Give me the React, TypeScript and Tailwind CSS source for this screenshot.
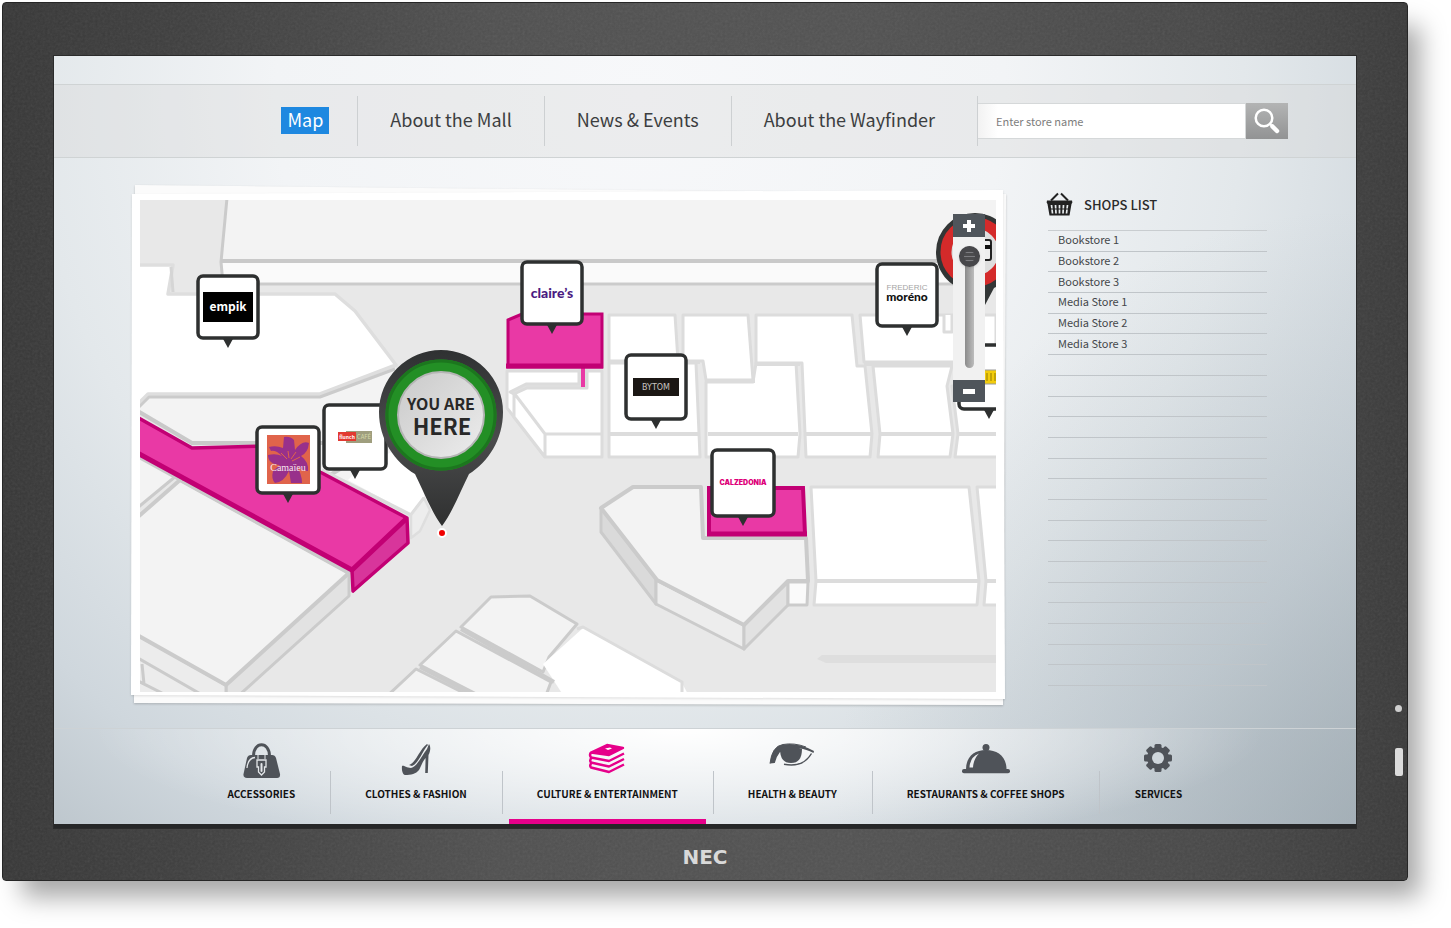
import { useState } from "react";
import type { ReactNode } from "react";

const NAV_ITEMS = ["Map", "About the Mall", "News & Events", "About the Wayfinder"];

const SHOPS = [
  "Bookstore 1",
  "Bookstore 2",
  "Bookstore 3",
  "Media Store 1",
  "Media Store 2",
  "Media Store 3",
];

const LIST_ROWS = 22;

function BagIcon() {
  return (
    <svg viewBox="0 0 48 36" className="h-9 w-12" fill="none" aria-hidden="true">
      <path d="M16.500 13C16.500-2 32.500-2 32.500 13" stroke="#4f5359" strokeWidth="3" />
      <path
        d="M14 12H35Q38 12 39 15L43 31Q43.500 35 40 35H10Q6 35 6.500 31L10 15Q11 12 14 12Z"
        fill="#4f5359"
      />
      <path d="M10 25Q11 15 18 14.500" stroke="#e3e6e9" strokeWidth="1.300" />
      <path d="M21 10V16M28 10V16" stroke="#e3e6e9" strokeWidth="1" />
      <path
        d="M20 17H29V24H27.500V29L24.500 32L21.500 29V24H20Z"
        stroke="#e3e6e9"
        strokeWidth="1.300"
      />
      <path d="M24.500 21V28" stroke="#e3e6e9" strokeWidth="2" strokeLinecap="round" />
    </svg>
  );
}

function ShoeIcon() {
  return (
    <svg viewBox="0 0 48 36" className="h-9 w-12" fill="#4f5359" aria-hidden="true">
      <path d="M10 23C12 22 14 25 19 25C25 24 30 12 35 6L37 1C39 4 38.500 8 36.500 12L35.800 30H33.200L33.600 15C30 19 29 24 27 27C24 31 19 32 13 32C10.500 31.500 9.500 27 10 23Z" />
      <path d="M17 22C24 20 27 7 35 1L36 2C31 7 27 20 20 23Z" />
    </svg>
  );
}

function BooksIcon() {
  return (
    <svg viewBox="0 0 48 36" className="h-9 w-12" fill="none" aria-hidden="true">
      <g stroke="#e6008a" strokeWidth="2.400" strokeLinejoin="round">
        <path d="M8 9.500L24 2L40 5L26 12Z" fill="#e6008a" />
        <path d="M8 9.500Q6 12 8 14.500L26 18L41 10.500" />
        <path d="M9 14.500Q6 17 8 19.500L26 23.500L41 16" />
        <path d="M9 19.500Q6 22 8 24.500L26 29L41 21.500" />
      </g>
      <path d="M22 5.500L27 4.500L29 5.500L25 7Z" fill="#fff" />
    </svg>
  );
}

function EyeIcon() {
  return (
    <svg viewBox="0 0 48 36" className="h-9 w-12" fill="none" aria-hidden="true">
      <path
        d="M2 20.500Q4 3 15 1.500Q30-1 46 8L45.500 10Q38 6 32 5.500L12 9Q8 14 6.800 20Z"
        fill="#4f5359"
      />
      <path d="M12 6Q12 20 23 20T34 6L22 2Z" fill="#4f5359" />
      <path d="M2 20.500Q4 3 15 1.500Q26-.500 38 4" stroke="#4f5359" strokeWidth="1" />
      <path d="M16 21.300Q35 25 43.500 10.500" stroke="#4f5359" strokeWidth="1.400" />
    </svg>
  );
}

function ClocheIcon() {
  return (
    <svg viewBox="0 0 48 36" className="h-9 w-12" aria-hidden="true">
      <g fill="#4f5359">
        <circle cx="24" cy="4.500" r="3.500" />
        <path d="M4 26.500C4 14 12 7 24 7S44.500 14 44.500 26.500Z" />
        <rect y="26" width="48" height="4.200" rx="2" />
      </g>
      <path d="M7.500 24.500Q8 14 17 10.500Q11.500 16 11 24.500Z" fill="#eceef0" />
    </svg>
  );
}

function GearIcon() {
  return (
    <svg viewBox="0 0 48 36" className="h-9 w-12" aria-hidden="true">
      <g fill="#4f5359">
        {[0, 45, 90, 135].map((angle) => (
          <rect
            key={angle}
            x="20.500"
            y="1"
            width="7"
            height="28"
            rx="1.500"
            transform={`rotate(${angle} 24 15)`}
          />
        ))}
      </g>
      <circle cx="24" cy="15" r="8.500" fill="none" stroke="#4f5359" strokeWidth="5" />
      <circle cx="24" cy="15" r="6" fill="#cfd6db" />
    </svg>
  );
}

function BasketIcon() {
  return (
    <svg viewBox="0 0 27 24" className="h-6 w-[27px]" aria-hidden="true">
      <path d="M5 8.500L12 1.500M15 1.500L22 8.500" stroke="#222" strokeWidth="2" />
      <path d="M1 8.500H26Q27 10.500 25.500 12L23.500 23.500H3.500L1.500 12Q0 10.500 1 8.500Z" fill="#222" />
      <path
        d="M5.500 13L6.500 21.500M9.500 13L10 21.500M13.500 13V21.500M17.500 13L17 21.500M21.500 13L20.500 21.500"
        stroke="#e8ecee"
        strokeWidth="1.700"
      />
      <path d="M3 17H24" stroke="#222" strokeWidth="1" />
    </svg>
  );
}

const CATEGORIES = [
  { label: "ACCESSORIES", icon: <BagIcon /> },
  { label: "CLOTHES & FASHION", icon: <ShoeIcon /> },
  { label: "CULTURE & ENTERTAINMENT", icon: <BooksIcon /> },
  { label: "HEALTH & BEAUTY", icon: <EyeIcon /> },
  { label: "RESTAURANTS & COFFEE SHOPS", icon: <ClocheIcon /> },
  { label: "SERVICES", icon: <GearIcon /> },
];

interface StoreMarkerProps {
  x: number;
  y: number;
  width?: number;
  height?: number;
  children?: ReactNode;
}

// x and y are the top centre of the marker box
function StoreMarker({ x, y, width = 60, height = 62, children }: StoreMarkerProps) {
  return (
    <g transform={`translate(${x} ${y})`}>
      <path d={`M-6 ${height}H6L0 ${height + 11}Z`} fill="#2e3030" />
      <rect
        x={-width / 2}
        y="1"
        width={width}
        height={height}
        rx="5"
        fill="#fff"
        stroke="#2e3030"
        strokeWidth="3.500"
      />
      {children}
    </g>
  );
}

function MallMap() {
  return (
    <svg
      viewBox="140 200 856 492"
      className="relative block h-auto w-full bg-[#e8e8e8]"
      role="img"
      aria-label="Mall map"
    >
      <defs>
        <linearGradient id="pinFace" x1="0" y1="0" x2="1" y2="1">
          <stop offset="0" stopColor="#c9c9c9" />
          <stop offset="1" stopColor="#ededed" />
        </linearGradient>
        <linearGradient id="pinBody" x1="0" y1="0" x2="0" y2="1">
          <stop offset="0" stopColor="#2f3132" />
          <stop offset="0.500" stopColor="#4a4b4c" />
          <stop offset="1" stopColor="#2f3030" />
        </linearGradient>
      </defs>

      {/* Upper corridor */}
      <path d="M227 198L221 262H1000V198Z" fill="#f3f3f3" />
      <path d="M221 262H1000V284H223Z" fill="#fafafa" />
      <path d="M227 198L221 262L223 284H1000" fill="none" stroke="#cbcbcb" strokeWidth="3" />
      <path d="M221 261H1000" stroke="#c9c9c9" strokeWidth="4" />

      {/* West stores */}
      <g strokeLinejoin="round">
        <path
          d="M130 404L148 397H320L395 368L440 420L432 510L412 516L330 475L262 442H192L130 406Z"
          fill="#f3f3f3"
        />
        <path
          d="M130 265H173L168 294H335L355 311L374 336L396 365L320 394H148L136 406H130Z"
          fill="#fff"
          stroke="#dedede"
          strokeWidth="3.500"
        />
        <path d="M171 267L173 292" stroke="#d5d5d5" strokeWidth="3" />
        <path d="M138 408L149 397H320L395 369" fill="none" stroke="#cbcbcb" strokeWidth="3" />
        <path d="M348 480L364 464L420 440L424 497L411 514Z" fill="#fff" />
        <path d="M325 478L352 462" stroke="#cbcbcb" strokeWidth="4" />
        <path d="M322 470L411 515L424 498" fill="none" stroke="#dcdcdc" strokeWidth="3.500" />
        <path d="M411 515V538L420 531L430 510L424 498Z" fill="#ededed" stroke="#dedede" strokeWidth="2.500" />
        <path d="M136 410L192 443H330" fill="none" stroke="#c9c9c9" strokeWidth="4" />
      </g>

      {/* South west block */}
      <g strokeLinejoin="round" stroke="#cbcbcb" strokeWidth="3">
        <path d="M130 452L176 476L130 514Z" fill="#f3f3f3" />
        <path d="M226 685L349 572V596L236 698H226Z" fill="#e2e2e2" />
        <path d="M130 631L226 685V700H130Z" fill="#ececec" />
        <path d="M130 524L180 480L349 573L226 685L130 631Z" fill="#f3f3f3" strokeWidth="4" />
        <path d="M138 457L349 573" />
        <path d="M138 658L204 696M138 681L162 693M142 664L144 684" fill="none" />
      </g>

      {/* Highlighted long store */}
      <path d="M352 570L407 518L408 543L353 593Z" fill="#d8359b" />
      <path d="M130 412L192 447H265L322 473L407 518L352 570L130 449Z" fill="#e939a5" />
      <path d="M178 474L183 481L186 477Z" fill="#e939a5" />
      <g fill="none" stroke="#c20074" strokeLinejoin="round">
        <path d="M130 413L192 448L265 446L322 473L407 518L408 543L353 591L352 570L407 518" strokeWidth="3.500" />
        <path d="M130 449L352 570L406 519" strokeWidth="5" />
      </g>

      {/* South stores */}
      <g strokeLinejoin="round" stroke="#cbcbcb" strokeWidth="3">
        <path d="M461 627L491 597L530 596L577 624L549 657L543 672Z" fill="#f3f3f3" />
        <path d="M420 665L456 631L551 682L545 698H484Z" fill="#f3f3f3" />
        <path d="M385 698L416 669L474 698Z" fill="#f3f3f3" />
        <path d="M583 628L543 664L565 698H690L682 683Z" fill="#fff" stroke="none" />
        <path d="M577 629L583 627L682 682V698" fill="none" stroke="#dcdcdc" />
        <path d="M461 629L554 682M420 667L480 698" strokeWidth="4" />
      </g>

      {/* Middle row */}
      <g fill="#fff" stroke="#dcdcdc" strokeWidth="3" strokeLinejoin="round">
        <path d="M507 371H602V457H545L514 417L507 408Z" />
        <path d="M514 393L545 434V457M514 393V417L545 457M545 434H602" />
        <path d="M510 392L526 384H579V371H587V388H527L514 394Z" fill="#e0e0e0" />
        <path d="M609 315H675L678 361H609Z" />
        <path d="M609 363H696L700 457H609Z" />
        <path d="M683 315H748L753 380H706L703 361H683Z" />
        <path d="M706 382H753L756 363H796L800 434L798 457H706Z" />
        <path d="M756 315H852L857 366H865L872 434L870 457H806L802 363H756Z" />
        <path d="M860 315H996V362H864Z" />
        <path d="M873 366H952L947 386L953 434L950 457H878L880 434Z" />
        <path d="M944 315V332H952V315" />
        <path d="M952 386H957V362H1000V457H955L958 434Z" />
        <path
          d="M609 434H698M708 434H798M806 434H872M880 434H952M958 434H1000M611 362H700M706 381H755M756 364H800M864 364H1000"
          strokeWidth="4"
        />
      </g>

      {/* Highlighted store under the claire's marker */}
      <path d="M581 368H585V387H581Z" fill="#e939a5" />
      <path d="M508 320L522 314H602V367H508Z" fill="#e939a5" stroke="#c20074" strokeWidth="3" />
      <path d="M506 366H603" stroke="#c20074" strokeWidth="5" />

      {/* South east stores */}
      <g strokeLinejoin="round" stroke="#cbcbcb" strokeWidth="3">
        <path d="M601 508V532L656 604V579Z" fill="#dadada" />
        <path d="M656 580L744 625V649L656 604Z" fill="#ededed" />
        <path d="M744 625L788 582V605L744 649Z" fill="#e2e2e2" />
        <path d="M788 582H808L807 605H788Z" fill="#fafafa" />
        <path
          d="M601 508L633 487H701L703 538H806L808 581H788L744 625L657 580Z"
          fill="#f3f3f3"
          strokeWidth="4"
        />
      </g>
      <g fill="#fff" stroke="#dcdcdc" strokeWidth="3" strokeLinejoin="round">
        <path d="M811 487H969L979 581L977 605H814L816 581Z" />
        <path d="M977 487H1000V605H984L986 581Z" />
        <path d="M816 581H979M986 581H1000" strokeWidth="4" />
      </g>
      <path d="M709 488H803L805 534H709Z" fill="#e939a5" stroke="#c20074" strokeWidth="4" />
      <path d="M707 534H807" stroke="#c20074" strokeWidth="5" />
      <path d="M817 659L822 655H996V663H826Z" fill="#dedede" />

      <StoreMarker x={228} y={275}>
        <rect x="-25" y="17" width="50" height="30" fill="#000" />
        <text y="36" textAnchor="middle" fill="#fff" fontSize="12" fontWeight="700">
          empik
        </text>
      </StoreMarker>
      <StoreMarker x={552} y={261}>
        <text
          y="37"
          textAnchor="middle"
          fill="#4b1c82"
          fontSize="14"
          fontWeight="900"
          className="font-['Lato',sans-serif]"
        >
          claire’s
        </text>
      </StoreMarker>
      <StoreMarker x={656} y={354} height={64}>
        <rect x="-23" y="24" width="46" height="18" fill="#1b1714" />
        <text
          y="36"
          textAnchor="middle"
          fill="#c8c4c0"
          fontSize="8"
          className="font-['DejaVu_Sans',sans-serif]"
        >
          BYTOM
        </text>
      </StoreMarker>
      <StoreMarker x={907} y={263}>
        <text
          y="27"
          textAnchor="middle"
          fill="#a5a5a5"
          fontSize="8"
          className="font-['Liberation_Sans',sans-serif]"
        >
          FREDERIC
        </text>
        <text
          y="38"
          textAnchor="middle"
          fill="#111"
          fontSize="12"
          fontWeight="900"
          className="font-['Lato',sans-serif]"
        >
          moréno
        </text>
      </StoreMarker>
      <StoreMarker x={743} y={449} width={62} height={66}>
        <text
          y="36"
          textAnchor="middle"
          fill="#dd0079"
          fontSize="7"
          fontWeight="900"
          className="font-['Inter',sans-serif]"
        >
          CALZEDONIA
        </text>
      </StoreMarker>
      <StoreMarker x={355} y={404} height={64} width={62}>
        <rect x="-9" y="27" width="26" height="12" fill="#9f9e7e" />
        <rect x="-17" y="28" width="18" height="9" fill="#e23a31" />
        <text x="-8" y="35" textAnchor="middle" fill="#fff" fontSize="5" fontWeight="700">
          flunch
        </text>
        <text x="9" y="35" textAnchor="middle" fill="#d3d9a8" fontSize="6">
          CAFÉ
        </text>
      </StoreMarker>
      <StoreMarker x={288} y={426} height={66} width={62}>
        <rect x="-21" y="9" width="43" height="49" fill="#e0644b" />
        <path
          d="M-4 11Q2 10 6 14L7 24Q14 14 21 17Q20 27 13 30Q21 36 20 45Q13 45 8 39Q14 48 14 57H3L1 45Q-4 56-13 57Q-17 53-15 45L-8 39Q-20 38-20 29Q-12 27-6 30Q-12 24-17 25L-19 21Q-12 19-5 22Z"
          fill="#98308b"
        />
        <path d="M-1 33L-7 27M1 32L0 25M3 33L8 26M4 35L12 31" stroke="#e0644b" strokeWidth="1" />
        <text
          y="45"
          textAnchor="middle"
          fill="#f6e5ef"
          fontSize="10"
          className="font-['Liberation_Serif',serif]"
        >
          Camaïeu
        </text>
      </StoreMarker>

      {/* You are here pin */}
      <path
        d="M379 412A62 62 0 1 1 503 412C503 440 488 462 469 474C461 490 452 513 442 526C432 513 423 490 415 474C395 462 379 440 379 412Z"
        fill="url(#pinBody)"
      />
      <circle cx="441" cy="415" r="49" fill="none" stroke="#238f25" strokeWidth="13" />
      <circle cx="441" cy="415" r="54" fill="none" stroke="#1c761e" strokeWidth="3" />
      <circle cx="441" cy="415" r="43" fill="url(#pinFace)" stroke="#b5b5b5" strokeWidth="2" />
      <g textAnchor="middle" fill="#282828" fontWeight="700">
        <text x="441" y="410" fontSize="16">
          YOU ARE
        </text>
        <text x="442" y="435" fontSize="22">
          HERE
        </text>
      </g>
      <circle cx="442" cy="533" r="4" fill="#f00000" stroke="#fff" strokeWidth="2" />

      {/* Pin and marker behind the zoom control */}
      <path
        d="M936 252A39 39 0 1 1 1014 252C1014 275 1000 285 994 288L985 305L980 290C955 294 936 275 936 252Z"
        fill="#333636"
      />
      <circle cx="975" cy="252" r="29" fill="#dedede" stroke="#d42a2a" strokeWidth="11" />
      <rect x="974" y="240" width="17" height="20" rx="2" fill="#eee" stroke="#222" strokeWidth="2" />
      <path d="M974 247H991" stroke="#111" strokeWidth="4" />
      <StoreMarker x={989} y={344} height={64}>
        <rect x="-20" y="26" width="40" height="14" fill="#f2cc0c" stroke="#999" />
        <path d="M-2 29V37M2 29V37M6 29V37" stroke="#927b05" />
      </StoreMarker>
    </svg>
  );
}

function ZoomControl() {
  const [zoom, setZoom] = useState(0);

  return (
    <div className="absolute top-[22px] right-[19px] flex w-8 flex-col bg-[#f1f1f1]">
      <button
        aria-label="Zoom in"
        onClick={() => setZoom(Math.max(0, zoom - 10))}
        className="flex h-[23px] items-center justify-center bg-[#4f555b]"
      >
        <svg viewBox="0 0 14 14" className="size-[14px]" aria-hidden="true">
          <path d="M7 1V13M1 7H13" stroke="#fff" strokeWidth="4" />
        </svg>
      </button>
      <div className="flex justify-center pt-[9px] pb-3">
        <input
          type="range"
          aria-label="Zoom level"
          value={zoom}
          onChange={(e) => setZoom(Number(e.target.value))}
          className="h-[122px] w-[21px] appearance-none bg-transparent [writing-mode:vertical-lr] [&::-webkit-slider-runnable-track]:w-[9px] [&::-webkit-slider-runnable-track]:rounded-full [&::-webkit-slider-runnable-track]:bg-[linear-gradient(to_right,#8b8b8b,#bcbcbc)] [&::-webkit-slider-thumb]:-ml-[6px] [&::-webkit-slider-thumb]:size-[21px] [&::-webkit-slider-thumb]:appearance-none [&::-webkit-slider-thumb]:rounded-full [&::-webkit-slider-thumb]:border-[5px] [&::-webkit-slider-thumb]:border-[#47474a] [&::-webkit-slider-thumb]:bg-[linear-gradient(#4c4c4e_0_1px,#7c7c80_1px_2px,#4c4c4e_2px_5px,#7c7c80_5px_6px,#4c4c4e_6px_9px,#7c7c80_9px_10px,#4c4c4e_10px)] [&::-webkit-slider-thumb]:bg-origin-padding [&::-webkit-slider-thumb]:shadow"
        />
      </div>
      <button
        aria-label="Zoom out"
        onClick={() => setZoom(Math.min(100, zoom + 10))}
        className="flex h-[22px] items-center justify-center bg-[#4f555b]"
      >
        <span className="h-[5px] w-3 bg-white" />
      </button>
    </div>
  );
}

function Header() {
  const [active, setActive] = useState("Map");

  return (
    <header className="mt-7 flex h-[74px] items-center justify-end border-y border-[#cfd3d4] bg-[#d8d8d8]/35 pr-[68px]">
      <nav className="flex">
        {NAV_ITEMS.map((item) => (
          <div
            key={item}
            className="flex h-[50px] items-center border-r border-[#cdd0d2] px-8 pb-[2px] first:pr-7 last:pr-[42px]"
          >
            <button
              onClick={() => setActive(item)}
              className={
                item === active
                  ? "bg-[#1e88e0] px-[6px] pb-[2px] text-lg leading-[25px] text-white"
                  : "pb-[2px] text-lg leading-[25px] text-[#3c3e40]"
              }
            >
              {item}
            </button>
          </div>
        ))}
      </nav>
      <form className="flex h-9" onSubmit={(e) => e.preventDefault()}>
        <input
          type="text"
          aria-label="Store name"
          placeholder="Enter store name"
          className="w-[268px] border border-l-0 border-[#d5d8d9] bg-white bg-[linear-gradient(to_right,#f2f2f2,#ffffff_20px)] pl-[18px] text-[11px] text-[#444] outline-none placeholder:text-[#7d7d7d]"
        />
        <button
          type="submit"
          aria-label="Search"
          className="flex w-[42px] items-center justify-center bg-linear-to-b from-[#b3b4b4] to-[#929394]"
        >
          <svg viewBox="0 0 26 26" className="size-[26px]" fill="none" stroke="#fff" aria-hidden="true">
            <circle cx="10" cy="10" r="8.300" strokeWidth="2.500" />
            <path d="M16 16L18 18" strokeWidth="2" />
            <path d="M18.500 18.500L23 23" strokeWidth="4.500" strokeLinecap="round" />
          </svg>
        </button>
      </form>
    </header>
  );
}

function ShopsList() {
  return (
    <aside className="flex w-[221px] shrink-0 flex-col pb-[14px]">
      <h2 className="flex h-[38px] items-start gap-[11px] text-[13px] leading-[26px] font-medium text-[#2a2a2a]">
        <BasketIcon />
        SHOPS LIST
      </h2>
      <ul className="ml-[2px] flex flex-1 flex-col border-t border-[#c9cdd0]">
        {Array.from({ length: LIST_ROWS }, (_, i) => (
          <li
            key={i}
            className="flex flex-1 items-center border-b border-[#c0c5c9] pb-[3px] pl-[10px] text-[11px] leading-4 text-[#44474a]"
          >
            {SHOPS[i] && <a href={`#shop-${i + 1}`}>{SHOPS[i]}</a>}
          </li>
        ))}
      </ul>
    </aside>
  );
}

function CategoryBar() {
  const [active, setActive] = useState("CULTURE & ENTERTAINMENT");

  return (
    <nav className="flex h-[96px] justify-center border-t border-[#cdd2d5] bg-[radial-gradient(ellipse_45%_130%_at_48%_0%,#ffffff,#ffffff90_45%,#ffffff00)]">
      {CATEGORIES.map(({ label, icon }, i) => (
        <div key={label} className="relative flex">
          {i > 0 && <span className="absolute top-[42px] left-0 h-[43px] w-px bg-[#bfc4c9]" />}
          <button
            onClick={() => setActive(label)}
            className="flex flex-col items-center gap-[7px] px-[35px] pt-[14px] text-[10px] leading-4 font-bold whitespace-nowrap text-[#111]"
          >
            {icon}
            {label}
          </button>
          {label === active && (
            <span className="absolute right-[7px] bottom-0 left-[7px] h-[5px] bg-[#e6008a]" />
          )}
        </div>
      ))}
    </nav>
  );
}

export default function App() {
  return (
    <div className="min-h-screen overflow-hidden bg-white pt-[2px] pr-[43px] pb-[46px] pl-[2px] font-['Noto_Sans_CJK_SC',sans-serif]">
      <div className="relative rounded-[4px] border border-[#262626] bg-[linear-gradient(to_right,#373737,#3e3e3e_12%,#505050_35%,#525252_60%,#484848_85%,#3a3a3a)] px-[51px] pt-[53px] shadow-[16px_20px_24px_-4px_rgba(0,0,0,0.35)]">
        {/* Grain of the plastic bezel */}
        <svg className="absolute inset-0 size-full opacity-10" aria-hidden="true">
          <filter id="grain">
            <feTurbulence type="fractalNoise" baseFrequency="0.400" numOctaves="2" />
            <feColorMatrix type="saturate" values="0" />
          </filter>
          <rect width="100%" height="100%" filter="url(#grain)" />
        </svg>

        <div className="relative flow-root border-b-4 border-[#262728] bg-[radial-gradient(ellipse_40%_80%_at_100%_100%,#96a3ab80,#96a3ab00),radial-gradient(ellipse_80%_135%_at_45%_5%,#f7f8fa,#f2f4f6_35%,#e3e8eb_58%,#cfd7dd_78%,#b0bac1)] shadow-[0_0_0_1px_#2b2b2b]">
          <Header />
          <main className="flex gap-[42px] pt-[34px] pr-[89px] pb-7 pl-[78px]">
            <section className="relative min-w-0 flex-1 p-2">
              <div className="absolute -inset-x-1 -inset-y-2 drop-shadow-[0_1px_1px_rgba(0,0,0,0.2)]">
                <div className="size-full bg-[#fbfbfb] [clip-path:polygon(7px_1px,calc(100%_-_2px)_10px,calc(100%_-_5px)_calc(100%_-_3px),6px_calc(100%_-_5px))]" />
              </div>
              <div className="absolute -inset-x-1 -inset-y-2 drop-shadow-[0_1px_1px_rgba(0,0,0,0.12)]">
                <div className="size-full bg-white [clip-path:polygon(4px_10px,calc(100%_-_5px)_6px,calc(100%_-_3px)_calc(100%_-_9px),3px_calc(100%_-_13px))]" />
              </div>
              <MallMap />
              <ZoomControl />
            </section>
            <ShopsList />
          </main>
          <CategoryBar />
        </div>

        <div className="relative flex h-[52px] items-center justify-center pt-[6px] font-['DejaVu_Sans',sans-serif] text-xl leading-none font-bold text-[#d9d9d9]">
          NEC
        </div>
        <span className="absolute right-[5px] bottom-[168px] size-[7px] rounded-full bg-[#cfcfcf]" />
        <span className="absolute right-[4px] bottom-[104px] h-7 w-2 rounded-xs bg-[#dcdcdc]" />
      </div>
    </div>
  );
}
